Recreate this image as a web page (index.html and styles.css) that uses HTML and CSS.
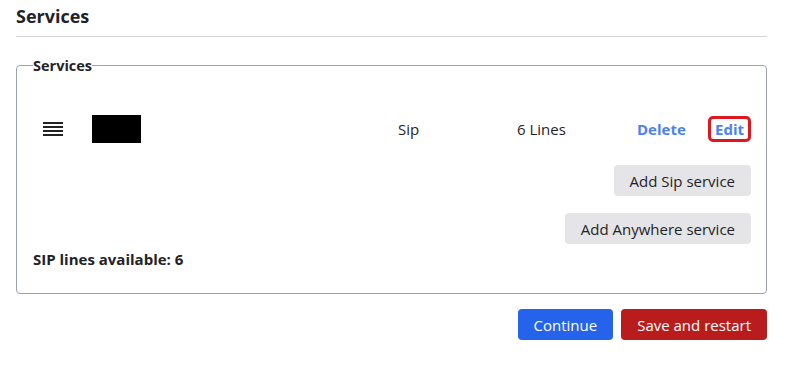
FILE: index.html
```html
<!DOCTYPE html>
<html lang="en">
<head>
  <meta charset="UTF-8" />
  <meta name="viewport" content="width=device-width, initial-scale=1" />
  <title>Services</title>
  <link rel="stylesheet" href="styles.css">
</head>
<body>
  <div class="page">
    <h2 class="page-title">Services</h2>

    <fieldset class="services">
      <legend>Services</legend>

      <div class="service-row">
        <span class="drag-handle">
          <svg width="20" height="14" viewBox="0 0 20 14">
            <rect x="0" y="0" width="20" height="2" fill="#222" />
            <rect x="0" y="4" width="20" height="2" fill="#222" />
            <rect x="0" y="8" width="20" height="2" fill="#222" />
            <rect x="0" y="12" width="20" height="2" fill="#222" />
          </svg>
        </span>
        <span class="redacted"></span>
        <span class="cell">Sip</span>
        <span class="cell">6 Lines</span>
        <a class="link" href="#">Delete</a>
        <a class="link link-edit" href="#">Edit</a>
      </div>

      <div class="add-buttons">
        <button class="btn btn-gray" type="button">Add Sip service</button>
        <button class="btn btn-gray" type="button">Add Anywhere service</button>
      </div>

      <p class="lines-info">SIP lines available: 6</p>
    </fieldset>

    <div class="actions">
      <button class="btn btn-blue" type="button">Continue</button>
      <button class="btn btn-red" type="button">Save and restart</button>
    </div>
  </div>
</body>
</html>
```

FILE: styles.css
```css
body {
  margin: 0;
  font-family: 'Open Sans', 'Noto Sans', sans-serif;
  color: #1f2328;
  background: #fff;
}
.page {
  padding: 0 24px 0 16px;
}
.page-title {
  margin: 0;
  padding: 4px 0 7px;
  font-size: 18px;
  font-weight: bold;
  line-height: 25px;
  border-bottom: 1px solid #d4d4d8;
}
.services {
  margin: 19px 0 0;
  padding: 31px 15px 24px 16px;
  border: 1px solid #9ca3af;
  border-radius: 4px;
}
.services legend {
  padding: 0;
  font-size: 14.5px;
  font-weight: bold;
}
.service-row {
  display: grid;
  grid-template-columns: 59px 306px 119px 120px 71px auto;
  align-items: center;
  height: 46px;
  font-size: 15px;
}
.drag-handle {
  display: flex;
  padding-left: 10px;
}
.redacted {
  width: 49px;
  height: 28px;
  background: #000;
}
.link {
  font-weight: bold;
  color: #4b82f0;
  text-decoration: none;
  justify-self: start;
}
.link-edit {
  padding: 0 4px;
  border: 3px solid #e0161f;
  border-radius: 5px;
  justify-self: end;
}
.add-buttons {
  display: flex;
  flex-direction: column;
  align-items: flex-end;
  gap: 17px;
  margin-top: 13px;
}
.btn {
  font-family: inherit;
  font-size: 15px;
  height: 31px;
  padding: 0 16px;
  border: none;
  border-radius: 4px;
  cursor: pointer;
}
.btn-gray {
  background: #e5e5e7;
  color: #1f2328;
}
.btn-blue {
  background: #2563eb;
  color: #fff;
}
.btn-red {
  background: #b91c1c;
  color: #fff;
}
.lines-info {
  margin: 5px 0 0;
  font-size: 15px;
  font-weight: bold;
}
.actions {
  display: flex;
  justify-content: flex-end;
  gap: 8px;
  margin-top: 15px;
}
```
